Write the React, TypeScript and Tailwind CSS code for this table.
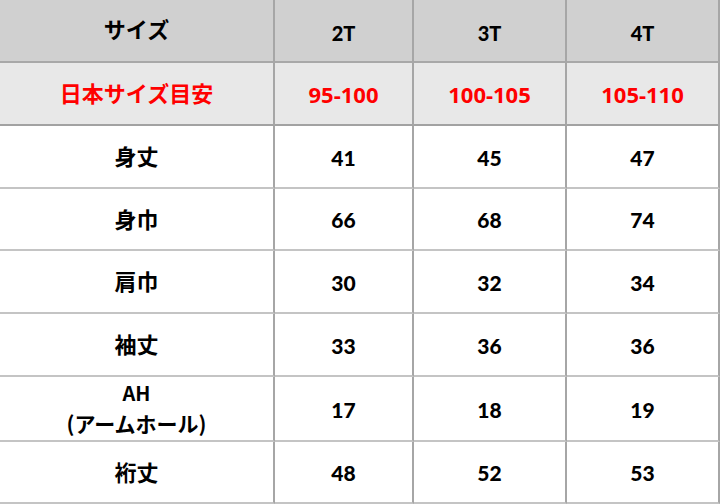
import React from "react";

type Row = { label: React.ReactNode; vals: string[]; h: string };

const rows: Row[] = [
  { label: "身丈", vals: ["41", "45", "47"], h: "h-[63px]" },
  { label: "身巾", vals: ["66", "68", "74"], h: "h-[62px]" },
  { label: "肩巾", vals: ["30", "32", "34"], h: "h-[63px]" },
  { label: "袖丈", vals: ["33", "36", "36"], h: "h-[63px]" },
  {
    label: (
      <div className="flex flex-col items-center leading-[30px]">
        <span className="text-[20px]">AH</span>
        <span className="text-[21px]">(アームホール)</span>
      </div>
    ),
    vals: ["17", "18", "19"],
    h: "h-[65px]",
  },
  { label: "裄丈", vals: ["48", "52", "53"], h: "h-[62px]" },
];

const cellB = "flex items-center justify-center border-r-2 border-b-2 border-r-[#a6a6a6]";
const jp = "font-['Noto_Sans_CJK_JP','Noto_Sans',sans-serif] font-bold";
const num = "font-['Lato','Open_Sans',sans-serif] font-black";
const rnum = "font-['Open_Sans','Noto_Sans',sans-serif] font-bold";

export default function App() {
  return (
    <div className="w-[720px] h-[504px] bg-white overflow-hidden">
      <div className="grid grid-cols-[275px_139px_153px_153px]">
        <div className={`${cellB} ${jp} h-[63px] bg-[#d0d0d0] border-b-[#a8a8a8] text-[22px] text-black pb-[4px]`}>
          サイズ
        </div>
        {["2T", "3T", "4T"].map((t) => (
          <div key={t} className={`${cellB} ${num} h-[63px] bg-[#d0d0d0] border-b-[#a8a8a8] text-[20px] text-black pt-[5px]`}>
            {t}
          </div>
        ))}
        <div className={`${cellB} ${jp} h-[63px] bg-[#e8e8e8] border-b-[#a2a2a2] text-[22px] text-[#ff0000] pb-[2px]`}>
          日本サイズ目安
        </div>
        {["95-100", "100-105", "105-110"].map((t) => (
          <div key={t} className={`${cellB} ${rnum} h-[63px] bg-[#e8e8e8] border-b-[#a2a2a2] text-[22px] text-[#ff0000] pt-[1px]`}>
            {t}
          </div>
        ))}
        {rows.map((r, i) => (
          <React.Fragment key={i}>
            <div className={`${cellB} ${jp} ${r.h} border-b-[#c4c4c4] text-[22px] text-black pb-[2px]`}>
              {r.label}
            </div>
            {r.vals.map((v, j) => (
              <div key={j} className={`${cellB} ${num} ${r.h} border-b-[#c4c4c4] text-[21px] text-black pt-[2px]`}>
                {v}
              </div>
            ))}
          </React.Fragment>
        ))}
      </div>
    </div>
  );
}
